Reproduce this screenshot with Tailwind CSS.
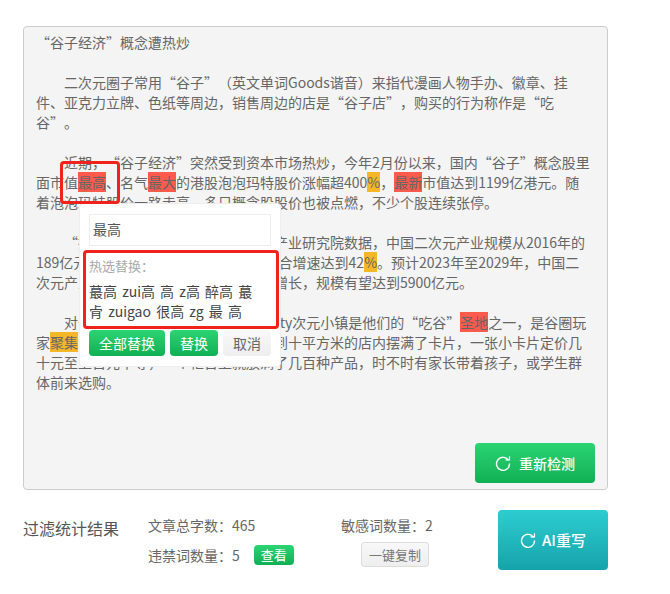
<!DOCTYPE html>
<html lang="zh-CN">
<head>
    <meta charset="UTF-8">
    <title>过滤统计结果</title>
    <script src="https://cdn.jsdelivr.net/npm/@tailwindcss/browser@4"></script>
</head>
<body class="bg-white font-['Noto_Sans_CJK_SC','Liberation_Sans',sans-serif] [text-spacing-trim:space-all] text-[#666] text-sm leading-5">
    <div class="w-[670px] h-[594px] pt-[26px] pl-[23px] relative overflow-hidden">

        <!-- Article panel -->
        <div class="relative w-[585px] h-[464px] bg-[#f4f4f4] border border-[#ccc] rounded-[4px] pt-[5px] pl-3 pr-[15px]">
            <p>“谷子经济”概念遭热炒</p>
            <p class="mt-5 indent-7">二次元圈子常用“谷子”（英文单词Goods谐音）来指代漫画人物手办、徽章、挂件、亚克力立牌、色纸等周边，销售周边的店是“谷子店”，购买的行为称作是“吃谷”。</p>
            <p class="mt-5 indent-7">近期，“谷子经济”突然受到资本市场热炒，今年2月份以来，国内“谷子”概念股里面市值<span class="bg-[#ff5b4d]">最高</span>、名气<span class="bg-[#ff5b4d]">最大</span>的港股泡泡玛特股价涨幅超400<span class="bg-[#f4b727]">%</span>，<span class="bg-[#ff5b4d]">最新</span>市值达到1199亿港元。随着泡泡玛特股价一路走高，多只概念股股价也被点燃，不少个股连续张停。</p>
            <p class="mt-5 indent-7">“据艾媒咨询及中商情报网与前瞻产业研究院数据，中国二次元产业规模从2016年的189亿元增长到2023年 1800亿元，年复合增速达到42<span class="bg-[#f4b727]">%</span>。预计2023年至2029年，中国二次元产业还将继续保持较快的速度持续增长，规模有望达到5900亿元。</p>
            <p class="mt-5 indent-7">对于年轻人来说，上海百联ZX和Cuty次元小镇是他们的“吃谷”<span class="bg-[#ff5b4d]">圣地</span>之一，是谷圈玩家<span class="bg-[#f4b727]">聚集</span>的打卡场所。在这里一家面积不到十平方米的店内摆满了卡片，一张小卡片定价几十元至上百元不等，一个柜台上就放满了几百种产品，时不时有家长带着孩子，或学生群体前来选购。</p>

            <button class="absolute right-3 bottom-[6px] w-[120px] h-10 flex items-center justify-center gap-2 rounded-[4px] bg-gradient-to-b from-[#2bd472] to-[#0fb055] text-white text-[14px] font-medium">
                <svg class="w-4 h-4" viewBox="0 0 16 16" fill="none" stroke="currentColor" stroke-width="1.4"><path d="M13.6 5.5A6.5 6.5 0 1 0 14.5 8.5"/><path d="M10.5 4.8h4V1.2" stroke-width="1.2"/></svg>
                <span>重新检测</span>
            </button>
        </div>

        <!-- Stats row -->
        <div class="flex mt-5 w-[585px]">
            <div class="w-[125px] text-base text-[#555] pt-[6px]">过滤统计结果</div>
            <div class="w-[193px] pt-[5px]">
                <div>文章总字数：465</div>
                <div class="flex items-center mt-[10px]">
                    <span>违禁词数量：5</span>
                    <button class="ml-[14px] w-10 h-5 rounded-[4px] bg-gradient-to-b from-[#2bd472] to-[#0fb055] text-white text-[13px] leading-5">查看</button>
                </div>
            </div>
            <div class="w-[157px] pt-[5px]">
                <div>敏感词数量：2</div>
                <button class="block ml-5 mt-[7px] w-[68px] h-[25px] rounded-[3px] border border-[#ddd] bg-gradient-to-b from-[#f8f8f8] to-[#eee] text-[#777] text-[13px]">一键复制</button>
            </div>
            <button class="w-[110px] h-[60px] flex items-center justify-center gap-[6px] rounded-[4px] bg-gradient-to-b from-[#2ccdd0] to-[#16a3ab] text-white text-[15px] font-medium">
                <svg class="w-4 h-4" viewBox="0 0 16 16" fill="none" stroke="currentColor" stroke-width="1.4"><path d="M13.6 5.5A6.5 6.5 0 1 0 14.5 8.5"/><path d="M10.5 4.8h4V1.2" stroke-width="1.2"/></svg>
                <span>AI重写</span>
            </button>
        </div>

        <!-- Replace popover -->
        <div class="absolute left-[79px] top-[203px] w-[202px] h-[164px] bg-white border border-[#eee] rounded-[4px] px-[9px] pt-[10px]">
            <div class="h-[32px] border border-[#eee] pl-[3px] leading-[29px] text-[#555]">最高</div>
            <div class="text-[13px] text-[#aaa] mt-[10px] leading-5">热选替换：</div>
            <div class="text-[#444] mt-[5px] leading-5 [word-spacing:2px]">蕞高 zui高 高 z高 醉高 蕞<br>肻 zuigao 很高 zg 最 高</div>
            <div class="flex gap-[5px] mt-[9px]">
                <button class="w-[76px] h-[26px] rounded-[4px] bg-gradient-to-b from-[#2bd472] to-[#0fb055] text-white">全部替换</button>
                <button class="w-[48px] h-[26px] rounded-[4px] bg-gradient-to-b from-[#2bd472] to-[#0fb055] text-white">替换</button>
                <button class="w-[48px] h-[26px] rounded-[4px] bg-gradient-to-b from-[#f8f8f8] to-[#eee] text-[#666]">取消</button>
            </div>
        </div>

        <!-- Red annotation frames -->
        <div class="absolute left-[60px] top-[161px] w-[60px] h-[43px] border-[3px] border-[#f0231c] rounded-[4px]"></div>
        <div class="absolute left-[83px] top-[250px] w-[196px] h-[79px] border-[3px] border-[#f0231c] rounded-[4px]"></div>
    </div>
</body>
</html>
